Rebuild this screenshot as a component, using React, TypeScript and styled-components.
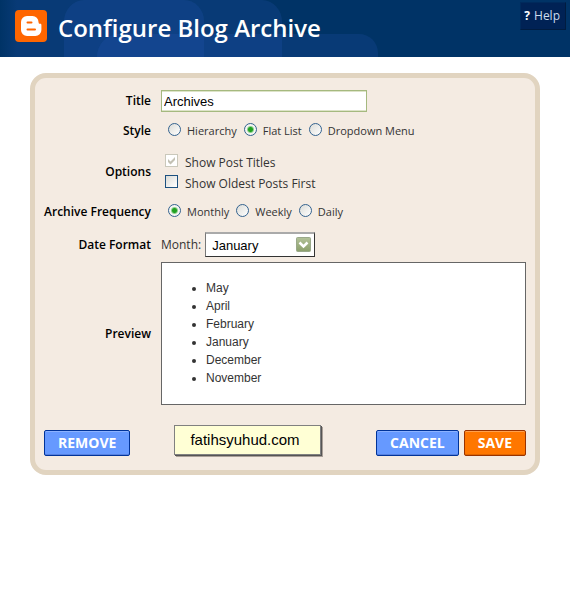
import React, { useState } from "react";
import styled, { createGlobalStyle } from "styled-components";

const GlobalStyle = createGlobalStyle`
  * { box-sizing: border-box; }
  body {
    margin: 0;
    background: #fff;
    color: #333;
    font-family: "Open Sans", "Trebuchet MS", sans-serif;
    font-size: 12px;
    line-height: 18px;
  }
`;

const Header = styled.header`
  position: relative;
  display: flex;
  align-items: flex-start;
  height: 57px;
  padding: 2px 4px 0 15px;
  overflow: hidden;
  background: #003366;
`;

const HeaderArt = styled.svg`
  position: absolute;
  left: 0;
  top: 0;
`;

const Brand = styled.div`
  position: relative;
  display: flex;
  flex: 1;
  gap: 11px;
  padding-top: 8px;
`;

const Heading = styled.h1`
  margin: 0;
  color: #fff;
  font-size: 24px;
  font-weight: 600;
  line-height: 36px;
  white-space: nowrap;
`;

const HelpLink = styled.a`
  position: relative;
  display: flex;
  gap: 4px;
  height: 28px;
  padding: 0 5px 0 3px;
  border: 1px solid;
  border-color: #002a5c #001c40 #001c40 #002a5c;
  background: #002255;
  color: #ccddee;
  line-height: 26px;
  text-decoration: none;
`;

const HelpMark = styled.b`
  color: #fff;
`;

const Panel = styled.form`
  margin: 16px 30px;
  padding: 12px 9px 10px;
  border: 5px solid #e1d4c0;
  border-radius: 16px;
  background: #f4ebe2;
`;

const Fields = styled.div`
  display: grid;
  grid-template-columns: 107px minmax(0, 1fr);
  column-gap: 10px;
  align-items: center;
`;

const FieldLabel = styled.label<{ $raised?: boolean }>`
  padding-bottom: ${(p) => (p.$raised ? "4px" : "0")};
  color: #000;
  font-weight: 600;
  text-align: right;
  white-space: nowrap;
`;

const TextInput = styled.input`
  width: 206px;
  height: 22px;
  padding: 1px 2px 0;
  border: 1px solid #a5b97f;
  box-shadow: inset 0 1px #dde3c8, inset 0 -1px #dde3c8;
  background: #fff;
  color: #000;
  font-family: "Liberation Sans", Arial, sans-serif;
  font-size: 13px;
`;

const ChoiceRow = styled.div`
  display: flex;
  align-items: center;
  gap: 7px;
  height: 38px;
  padding-left: 7px;
`;

const Choice = styled.label`
  display: flex;
  align-items: center;
  gap: 6px;
  font-size: 11px;
  white-space: nowrap;
`;

const Radio = styled.input.attrs({ type: "radio" })`
  appearance: none;
  width: 13px;
  height: 13px;
  margin: 0 0 4px;
  border: 1px solid #33628f;
  border-radius: 50%;
  background: linear-gradient(135deg, #dcdcd7, #fff);
  &:checked {
    background: radial-gradient(circle, #21a121 0 2px, #8fd08f 3px, #f5f5f2 4px);
  }
`;

const OptionList = styled.div`
  display: grid;
  gap: 3px;
  padding: 4px 0 0 4px;
`;

const Option = styled.label`
  display: flex;
  align-items: center;
  gap: 7px;
`;

const CheckHolder = styled.span`
  display: grid;
  margin-bottom: 5px;
  & > * { grid-area: 1 / 1; }
`;

const Checkbox = styled.input.attrs({ type: "checkbox" })`
  appearance: none;
  width: 13px;
  height: 13px;
  margin: 0;
  border: 1px solid #1c5180;
  background: linear-gradient(135deg, #dcdcd7, #fff);
  &:disabled {
    border-color: #cac8bb;
    background: #fff;
  }
  & + svg { visibility: hidden; pointer-events: none; }
  &:checked + svg { visibility: visible; }
`;

const DateRow = styled.div`
  display: flex;
  align-items: center;
  gap: 4px;
  height: 31px;
  padding-bottom: 4px;
`;

const SelectHolder = styled.div`
  display: grid;
  align-items: center;
  & > * { grid-area: 1 / 1; }
  & > svg { justify-self: end; margin-right: 3px; pointer-events: none; }
`;

const Select = styled.select`
  appearance: none;
  width: 110px;
  height: 25px;
  padding: 0 22px 0 6px;
  border: 1px solid #333;
  border-top: 2px solid #aaa;
  border-left-color: #777;
  border-radius: 0;
  background: #fff;
  color: #000;
  font-family: "Liberation Sans", Arial, sans-serif;
  font-size: 13px;
`;

const Preview = styled.div`
  padding: 16px 0 17px;
  border: 1px solid #666;
  background: #fff;
  font-family: "Liberation Sans", Arial, sans-serif;
`;

const MonthList = styled.ul`
  margin: 0;
  padding-left: 44px;
`;

const Actions = styled.div`
  display: flex;
  align-items: center;
  gap: 5px;
  margin-top: 20px;
`;

const Button = styled.button<{ $accent?: boolean }>`
  height: 26px;
  padding: 0 13px;
  border: 1px solid ${(p) => (p.$accent ? "#993300" : "#003399")};
  border-radius: 2px;
  box-shadow: inset 0 1px ${(p) => (p.$accent ? "#ffa04d" : "#8cb2ff")},
    inset 0 -1px ${(p) => (p.$accent ? "#e06600" : "#5580e0")};
  background: ${(p) => (p.$accent ? "#ff7700" : "#6699ff")};
  color: #fff;
  font-family: "Open Sans", "Trebuchet MS", sans-serif;
  font-size: 14px;
  font-weight: 700;
  line-height: 24px;
`;

const Note = styled.div`
  margin: 0 auto 5px 39px;
  padding: 0 20px 0 15px;
  border: 1px solid #808080;
  box-shadow: 1px 1px #555, 2px 2px #aaa099;
  background: #ffffd5;
  color: #000;
  font-family: "Liberation Sans", Arial, sans-serif;
  font-size: 15px;
  line-height: 28px;
`;

const BloggerLogo = () => (
  <svg width="32" height="32" viewBox="0 0 32 32" aria-hidden="true">
    <rect width="32" height="32" rx="4" fill="#ff6600" />
    <path
      d="M12 6h5.500a6 6 0 0 1 6 6c0 1.300.6 1.800 1.700 1.800.8 0 1.200.5 1.200 1.300V20a6 6 0 0 1-6 6H12a6 6 0 0 1-6-6v-8a6 6 0 0 1 6-6z"
      fill="#fff"
    />
    <path d="M12.500 12.500h4M12.500 19.500h7.500" stroke="#ff6600" strokeWidth="2" strokeLinecap="round" />
  </svg>
);

const Backdrop = () => (
  <HeaderArt width="380" height="57" aria-hidden="true">
    <defs>
      <linearGradient id="edge">
        <stop offset="0" stopColor="#003366" />
        <stop offset="1" stopColor="#003366" stopOpacity="0" />
      </linearGradient>
    </defs>
    <g fill="#3366cc" fillOpacity="0.16">
      <path d="M0 0h184a20 21 0 0 1 20 21v36H0z" />
      <path d="M64 57V22A20 22 0 0 1 84 0h178a20 22 0 0 1 20 22v35z" />
      <path d="M97 57a22 23 0 0 1 22-23h240a19 19 0 0 1 19 19v4z" />
    </g>
    <rect width="17" height="57" fill="url(#edge)" />
  </HeaderArt>
);

const CheckMark = () => (
  <svg width="13" height="13" viewBox="0 0 13 13" aria-hidden="true">
    <path d="M3 5v3l2.500 2.500L10 6V3L5.500 7.500z" fill="#c3c1b4" />
  </svg>
);

const SelectArrow = () => (
  <svg width="17" height="17" viewBox="0 0 17 17" aria-hidden="true">
    <defs>
      <linearGradient id="arrow" x2="0" y2="1">
        <stop offset="0" stopColor="#b3c299" />
        <stop offset="1" stopColor="#8b9f6b" />
      </linearGradient>
    </defs>
    <rect x="1.500" y="1.500" width="14" height="14" rx="1" fill="url(#arrow)" stroke="#9aa98a" />
    <path d="M4.500 6.500l4 4 4-4" fill="none" stroke="#fff" strokeWidth="2.500" />
  </svg>
);

const styles = ["Hierarchy", "Flat List", "Dropdown Menu"];
const frequencies = ["Monthly", "Weekly", "Daily"];
const months = ["May", "April", "February", "January", "December", "November"];

function RadioRow(props: { name: string; labelledBy: string; options: string[]; initial: string }) {
  const [value, setValue] = useState(props.initial);
  return (
    <ChoiceRow role="radiogroup" aria-labelledby={props.labelledBy}>
      {props.options.map((option) => (
        <Choice key={option}>
          <Radio name={props.name} checked={value === option} onChange={() => setValue(option)} />
          {option}
        </Choice>
      ))}
    </ChoiceRow>
  );
}

export default function App() {
  return (
    <>
      <GlobalStyle />
      <Header>
        <Backdrop />
        <Brand>
          <BloggerLogo />
          <Heading>Configure Blog Archive</Heading>
        </Brand>
        <HelpLink href="#help">
          <HelpMark>?</HelpMark>
          Help
        </HelpLink>
      </Header>
      <Panel onSubmit={(e) => e.preventDefault()}>
        <Fields>
          <FieldLabel htmlFor="title">Title</FieldLabel>
          <TextInput id="title" defaultValue="Archives" />
          <FieldLabel as="span" id="style">Style</FieldLabel>
          <RadioRow name="style" labelledBy="style" options={styles} initial="Flat List" />
          <FieldLabel as="span" id="options">Options</FieldLabel>
          <OptionList role="group" aria-labelledby="options">
            <Option>
              <CheckHolder>
                <Checkbox defaultChecked disabled />
                <CheckMark />
              </CheckHolder>
              Show Post Titles
            </Option>
            <Option>
              <CheckHolder>
                <Checkbox />
                <CheckMark />
              </CheckHolder>
              Show Oldest Posts First
            </Option>
          </OptionList>
          <FieldLabel as="span" id="frequency">Archive Frequency</FieldLabel>
          <RadioRow name="frequency" labelledBy="frequency" options={frequencies} initial="Monthly" />
          <FieldLabel as="span" $raised>Date Format</FieldLabel>
          <DateRow>
            <label htmlFor="month">Month:</label>
            <SelectHolder>
              <Select id="month" defaultValue="January">
                <option>January</option>
              </Select>
              <SelectArrow />
            </SelectHolder>
          </DateRow>
          <FieldLabel as="span">Preview</FieldLabel>
          <Preview>
            <MonthList>
              {months.map((month) => (
                <li key={month}>{month}</li>
              ))}
            </MonthList>
          </Preview>
        </Fields>
        <Actions>
          <Button type="button">REMOVE</Button>
          <Note>fatihsyuhud.com</Note>
          <Button type="button">CANCEL</Button>
          <Button type="submit" $accent>SAVE</Button>
        </Actions>
      </Panel>
    </>
  );
}
